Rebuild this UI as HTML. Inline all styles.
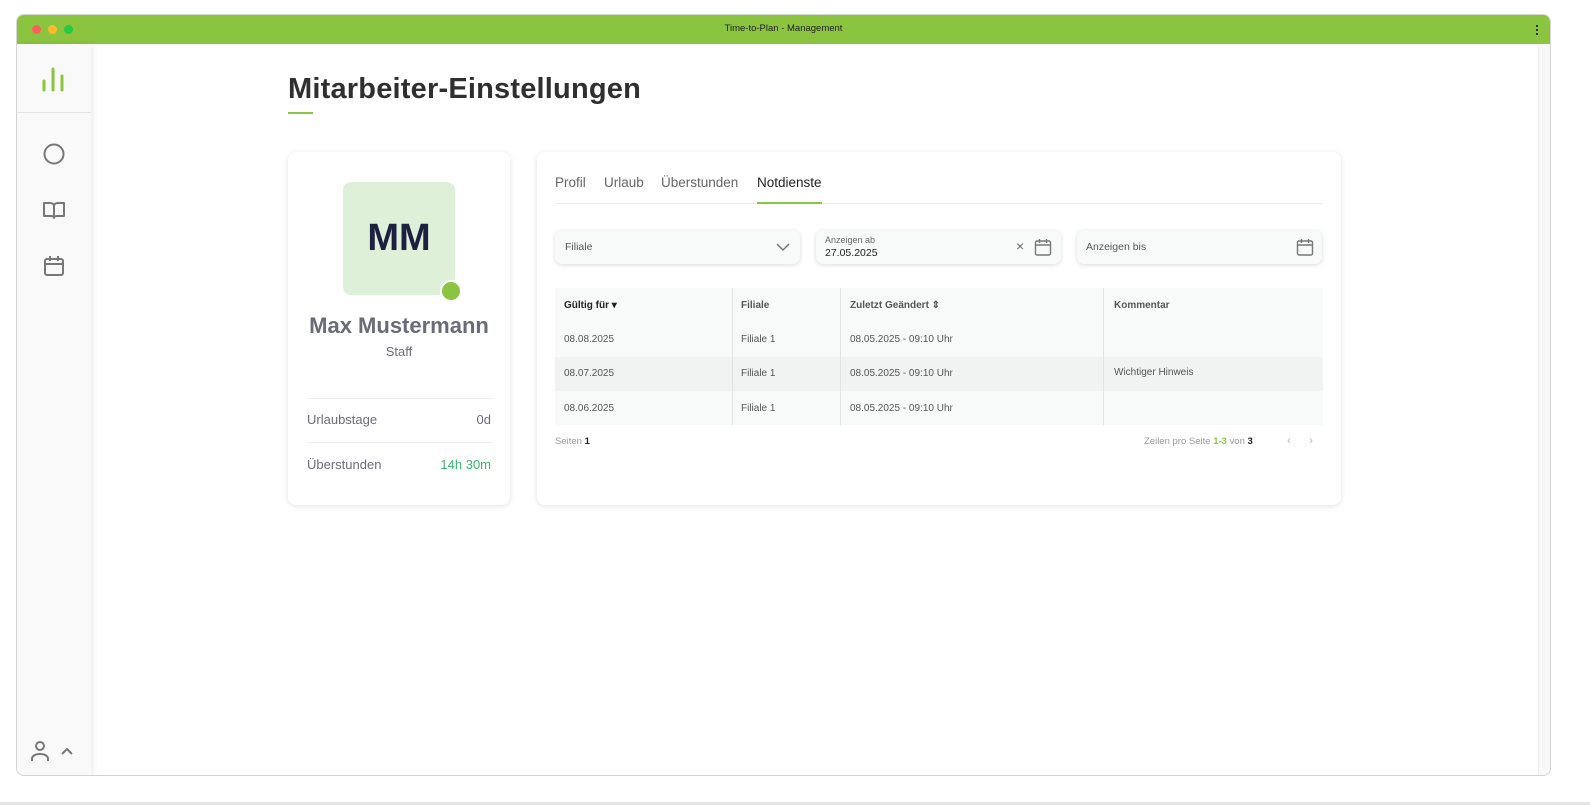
<!DOCTYPE html>
<html><head><meta charset="utf-8"><style>
*{box-sizing:border-box;margin:0;padding:0}
html,body{width:1590px;height:805px;overflow:hidden}
body{background:#fff;font-family:"Liberation Sans",sans-serif;position:relative;color:#333}
.abs{position:absolute}
.win{left:16px;top:14px;width:1535px;height:762px;border-radius:8px;border:1px solid #d4d4d4;overflow:hidden;background:#fff}
.bar{left:0;top:0;width:100%;height:29px;background:#8bc53f}
.dot{width:9px;height:9px;border-radius:50%;top:10px}
.side{left:0;top:29px;width:74px;height:733px;background:#f8f9f8;box-shadow:2px 0 6px rgba(0,0,0,.08)}
.card{background:#fff;border-radius:8px;box-shadow:0 1px 6px rgba(0,0,0,.12)}
.t{font-size:11px;color:#555}
.inp{background:#f8f9f9;border-radius:7px;box-shadow:0 1px 4px rgba(0,0,0,.15);height:34px}
</style></head><body>
<div class="abs win">
 <div class="abs bar"></div>
 <div class="abs dot" style="left:15px;background:#fe5f57"></div>
 <div class="abs dot" style="left:31px;background:#febc2e"></div>
 <div class="abs dot" style="left:47px;background:#28c840"></div>
 <div class="abs" style="left:0;width:100%;top:8px;text-align:center;font-size:9.5px;color:#222">Time-to-Plan - Management</div>
 <div class="abs" style="right:12px;top:9px;width:2px;height:11px;background:radial-gradient(circle,#222 1px,transparent 1.2px) 0 0/2px 4px"></div>
 <div class="abs side">
  <svg class="abs" style="left:24px;top:21px" width="24" height="28"><g stroke="#8bc53f" stroke-width="3" stroke-linecap="round"><line x1="3" y1="16" x2="3" y2="25"/><line x1="12" y1="4" x2="12" y2="25"/><line x1="21" y1="11" x2="21" y2="25"/></g></svg>
  <div class="abs" style="left:0;top:68px;width:74px;height:1px;background:#e3e5e3"></div>
  <svg class="abs" style="left:25px;top:98px" width="24" height="24"><circle cx="12" cy="12" r="9.5" fill="none" stroke="#777" stroke-width="2"/></svg>
  <svg class="abs" style="left:25px;top:155px" width="24" height="24"><path d="M2 4h6c2 0 4 1 4 3v12c0-1-1-2-3-2H2zM22 4h-6c-2 0-4 1-4 3v12c0-1 1-2 3-2h7z" fill="none" stroke="#777" stroke-width="2" stroke-linejoin="round"/></svg>
  <svg class="abs" style="left:25px;top:210px" width="24" height="24"><rect x="3" y="5" width="18" height="16" rx="2" fill="none" stroke="#777" stroke-width="2"/><path d="M3 10h18M8 2v5M16 2v5" stroke="#777" stroke-width="2"/></svg>
  <svg class="abs" style="left:12px;top:696px" width="50" height="24"><circle cx="11" cy="6" r="4" fill="none" stroke="#777" stroke-width="2"/><path d="M3 21v-2c0-3 3-5 8-5s8 2 8 5v2" fill="none" stroke="#777" stroke-width="2"/><path d="M33 14l5-5 5 5" fill="none" stroke="#777" stroke-width="2"/></svg>
 </div>
 <div class="abs" style="right:0;top:29px;width:12px;height:733px;background:#f8f8f8;border-left:1px solid #eee"></div>
</div>

<div class="abs" style="left:288px;top:73px;font-size:29px;font-weight:bold;color:#2f2f2f;letter-spacing:.2px">Mitarbeiter-Einstellungen</div>
<div class="abs" style="left:288px;top:112px;width:25px;height:2px;background:#8bc53f"></div>

<div class="abs card" style="left:288px;top:152px;width:222px;height:353px">
 <div class="abs" style="left:55px;top:30px;width:112px;height:113px;background:#dff0d8;border-radius:8px;text-align:center;line-height:113px;font-size:38px;font-weight:bold;color:#1c2140">MM</div>
 <div class="abs" style="left:152px;top:128px;width:22px;height:22px;border-radius:50%;background:#8bc53f;border:2px solid #fff"></div>
 <div class="abs" style="left:0;width:222px;top:161px;text-align:center;font-size:22px;font-weight:bold;color:#6a6b78">Max Mustermann</div>
 <div class="abs" style="left:0;width:222px;top:192px;text-align:center;font-size:13px;color:#6a6b78">Staff</div>
 <div class="abs" style="left:19px;width:185px;top:246px;height:1px;background:#eee"></div>
 <div class="abs" style="left:19px;top:260px;font-size:13px;color:#6a6b78">Urlaubstage</div>
 <div class="abs" style="right:19px;top:260px;font-size:13px;color:#6a6b78">0d</div>
 <div class="abs" style="left:19px;width:185px;top:290px;height:1px;background:#eee"></div>
 <div class="abs" style="left:19px;top:305px;font-size:13px;color:#6a6b78">Überstunden</div>
 <div class="abs" style="right:19px;top:305px;font-size:13px;color:#3cb371">14h 30m</div>
</div>

<div class="abs card" style="left:537px;top:152px;width:804px;height:353px">
 <div class="abs" style="left:18px;top:23px;font-size:13.5px;color:#666">Profil</div>
 <div class="abs" style="left:67px;top:23px;font-size:13.5px;color:#666">Urlaub</div>
 <div class="abs" style="left:124px;top:23px;font-size:13.5px;color:#666">Überstunden</div>
 <div class="abs" style="left:220px;top:23px;font-size:13.5px;color:#222">Notdienste</div>
 <div class="abs" style="left:18px;top:51px;width:768px;height:1px;background:#ececec"></div>
 <div class="abs" style="left:220px;top:50px;width:65px;height:2px;background:#8bc53f"></div>

 <div class="abs inp" style="left:18px;top:78px;width:245px"><div class="abs t" style="left:10px;top:11px;font-size:10.5px">Filiale</div>
  <svg class="abs" style="right:10px;top:11px" width="14" height="12"><path d="M1 3l6 6 6-6" fill="none" stroke="#777" stroke-width="1.5"/></svg></div>
 <div class="abs inp" style="left:279px;top:78px;width:245px"><div class="abs" style="left:9px;top:5px;font-size:9px;color:#666">Anzeigen ab</div><div class="abs" style="left:9px;top:17px;font-size:10.5px;color:#222">27.05.2025</div>
  <div class="abs" style="left:200px;top:8px;font-size:14px;color:#666">×</div>
  <svg class="abs" style="left:218px;top:8px" width="18" height="18"><rect x="1.5" y="3" width="15" height="14" rx="1.5" fill="none" stroke="#777" stroke-width="1.4"/><path d="M1.5 7h15M5.5 1v4M12.5 1v4" stroke="#777" stroke-width="1.4"/></svg></div>
 <div class="abs inp" style="left:540px;top:78px;width:245px"><div class="abs t" style="left:9px;top:11px;font-size:10.5px">Anzeigen bis</div>
  <svg class="abs" style="left:219px;top:8px" width="18" height="18"><rect x="1.5" y="3" width="15" height="14" rx="1.5" fill="none" stroke="#777" stroke-width="1.4"/><path d="M1.5 7h15M5.5 1v4M12.5 1v4" stroke="#777" stroke-width="1.4"/></svg></div>

 <div class="abs" style="left:18px;top:136px;width:768px;height:137px;background:#f8f9f9"></div>
 <div class="abs" style="left:18px;top:205px;width:768px;height:34px;background:#f1f2f2"></div>
 <div class="abs" style="left:195px;top:136px;width:1px;height:137px;background:#e2e2e2"></div>
 <div class="abs" style="left:303px;top:136px;width:1px;height:137px;background:#e2e2e2"></div>
 <div class="abs" style="left:566px;top:136px;width:1px;height:137px;background:#e2e2e2"></div>
 <div class="abs" style="left:27px;top:148px;font-size:10px;font-weight:bold;color:#222">Gültig für &#9662;</div>
 <div class="abs" style="left:204px;top:148px;font-size:10px;font-weight:bold;color:#555">Filiale</div>
 <div class="abs" style="left:313px;top:148px;font-size:10px;font-weight:bold;color:#555">Zuletzt Geändert ⇕</div>
 <div class="abs" style="left:577px;top:148px;font-size:10px;font-weight:bold;color:#555">Kommentar</div>

 <div class="abs t" style="left:27px;top:182px;font-size:10px">08.08.2025</div>
 <div class="abs t" style="left:204px;top:182px;font-size:10px">Filiale 1</div>
 <div class="abs t" style="left:313px;top:182px;font-size:10px">08.05.2025 - 09:10 Uhr</div>
 <div class="abs t" style="left:27px;top:216px;font-size:10px">08.07.2025</div>
 <div class="abs t" style="left:204px;top:216px;font-size:10px">Filiale 1</div>
 <div class="abs t" style="left:313px;top:216px;font-size:10px">08.05.2025 - 09:10 Uhr</div>
 <div class="abs t" style="left:577px;top:215px;font-size:10px">Wichtiger Hinweis</div>
 <div class="abs t" style="left:27px;top:251px;font-size:10px">08.06.2025</div>
 <div class="abs t" style="left:204px;top:251px;font-size:10px">Filiale 1</div>
 <div class="abs t" style="left:313px;top:251px;font-size:10px">08.05.2025 - 09:10 Uhr</div>

 <div class="abs" style="left:18px;top:284px;font-size:9.5px;color:#999">Seiten <b style="color:#222">1</b></div>
 <div class="abs" style="left:607px;top:284px;font-size:9.5px;color:#999">Zeilen pro Seite <b style="color:#8bc53f">1-3</b> von <b style="color:#222">3</b></div>
 <div class="abs" style="left:750px;top:281px;font-size:12px;color:#bbb">‹</div>
 <div class="abs" style="left:772px;top:281px;font-size:12px;color:#bbb">›</div>
</div>
<div class="abs" style="left:0;top:802px;width:1590px;height:3px;background:#e6e6e6"></div>
</body></html>
